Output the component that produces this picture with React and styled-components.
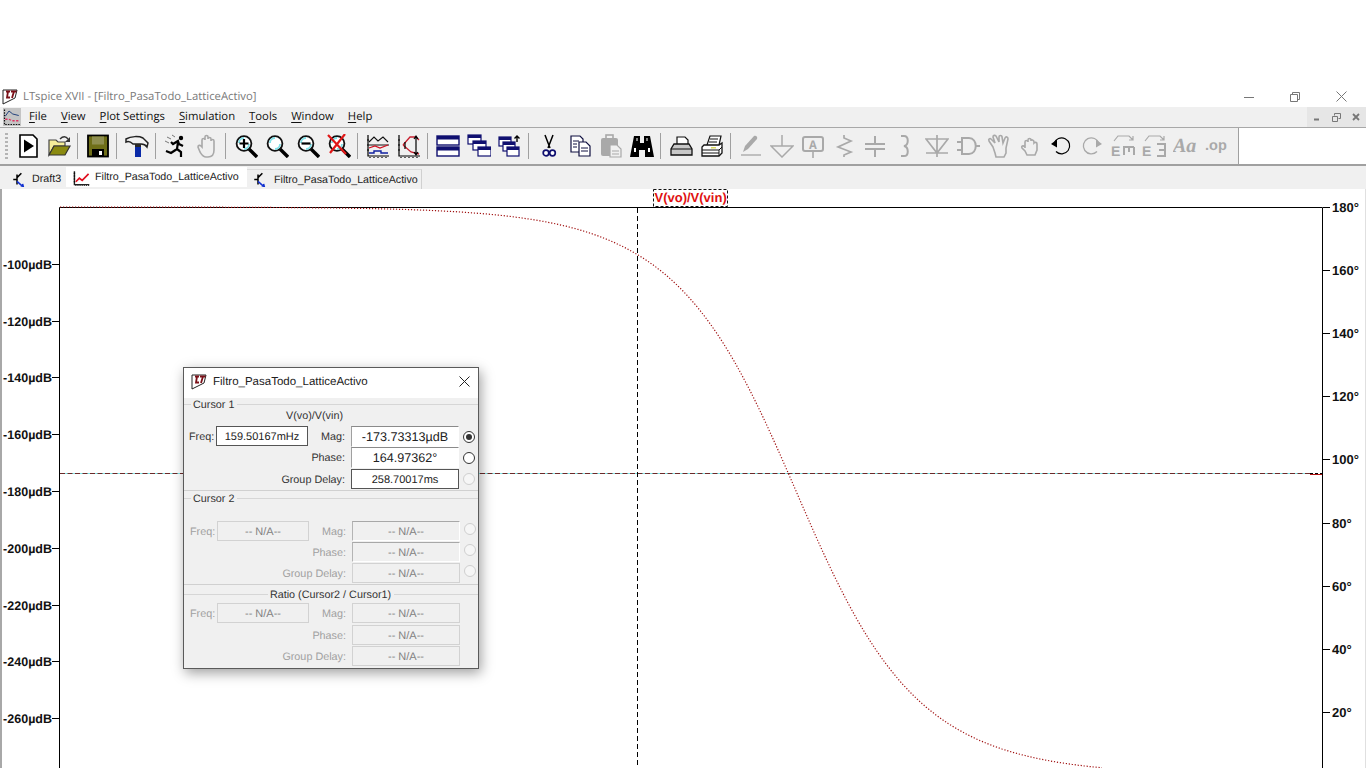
import React from 'react';
import styled, { createGlobalStyle } from 'styled-components';
import { Fragment } from 'react';

const GlobalStyle = createGlobalStyle`
  html, body { margin: 0; padding: 0; background: #ffffff; }
  body {
    width: 1366px;
    height: 768px;
    overflow: hidden;
    font-family: "Liberation Sans", Arial, sans-serif;
    text-rendering: geometricPrecision;
  }
`;

const Page = styled.div`
  width: 1366px;
  height: 768px;
  display: flex;
  flex-direction: column;
  padding-top: 86px;
  box-sizing: border-box;
  overflow: hidden;
`;

const TitleBar = styled.div`
  height: 21px;
  display: flex;
  align-items: center;
  padding-left: 2px;
  background: #ffffff;
`;

const TitleText = styled.span`
  margin: 0 0 1px 5px;
  font-family: "Open Sans", sans-serif;
  font-size: 11.3px;
  color: #7a7a7a;
`;

const WinControls = styled.div`
  margin-left: auto;
  display: flex;
  height: 100%;
  padding-right: 2px;
`;

const WinButton = styled.div`
  width: 46px;
  display: flex;
  align-items: center;
  justify-content: center;
`;

const MenuBar = styled.div`
  height: 20px;
  background: #f0f0f0;
  border-bottom: 1px solid #a8a8a8;
  display: flex;
  align-items: center;
  padding-left: 3px;
`;

const MenuLogo = styled.div`
  width: 18px;
  height: 18px;
  background: #c4c4c4;
  margin-right: 8px;
`;

const MenuItem = styled.span`
  font-family: "Open Sans", sans-serif;
  font-size: 11.3px;
  color: #111111;
  margin: 0 14px 1px 0;
  u { text-underline-offset: 2px; }
`;

const MdiButtons = styled.div`
  margin-left: auto;
  width: 59px;
  height: 20px;
  background: #e6e6e6;
  display: flex;
`;

const MdiButton = styled.div`
  flex: 1;
  display: flex;
  align-items: center;
  justify-content: center;
`;

const ToolbarRow = styled.div`
  height: 36px;
  border-bottom: 2px solid #a0a0a0;
  display: flex;
  background: #ffffff;
`;

const Toolbar = styled.div`
  width: 1239px;
  box-sizing: border-box;
  background: #f0f0f0;
  border-right: 1px solid #a0a0a0;
  display: flex;
  align-items: center;
`;

const Gripper = styled.div`
  width: 3px;
  height: 26px;
  margin: 0 4px 0 5px;
  background: repeating-linear-gradient(to bottom, #b4b4b4 0 2px, transparent 2px 4px);
`;

const ToolButton = styled.div`
  width: 31px;
  height: 30px;
  display: flex;
  align-items: center;
  justify-content: center;
`;

const ToolSep = styled.div`
  width: 1px;
  height: 26px;
  margin: 0 4px 0 3px;
  background: #a0a0a0;
`;

const TabBar = styled.div`
  height: 23px;
  background: #f0f0f0;
  display: flex;
  align-items: flex-start;
  padding-left: 3px;
`;

const Tab = styled.div`
  box-sizing: border-box;
  display: flex;
  align-items: center;
  margin-top: ${({ $active }) => ($active ? '1px' : '3px')};
  height: 20px;
  width: ${({ $width }) => $width}px;
  padding-left: ${({ $pad }) => $pad}px;
  background: ${({ $active }) => ($active ? '#ffffff' : '#f0f0f0')};
  border-right: ${({ $edge }) => ($edge ? '1px solid #d0d0d0' : '0')};
  border-top: ${({ $edge }) => ($edge ? '1px solid #dcdcdc' : '0')};
  font-size: 10.7px;
  color: #222222;
  svg { margin-right: ${({ $gap }) => $gap}px; flex: none; }
`;

const PlotArea = styled.div`
  position: relative;
  flex: 1;
  min-height: 0;
  background: #ffffff;
  border-left: 2px solid #a8a8a8;
  border-right: 1px solid #e0e0e0;
`;

const PlotSvg = styled.svg`
  display: block;
  text {
    font-family: "Liberation Sans", Arial, sans-serif;
    font-weight: 700;
    font-size: 13px;
    fill: #111111;
  }
  text.left { font-size: 12.5px; text-anchor: end; }
  text.trace { fill: #e01010; }
`;

const Dialog = styled.div`
  position: absolute;
  left: 181px;
  top: 178px;
  width: 296px;
  height: 302px;
  box-sizing: border-box;
  background: #f0f0f0;
  border: 1px solid #5a5a5a;
  box-shadow: 2px 4px 12px rgba(0, 0, 0, 0.38);
  font-size: 10.8px;
  color: #333333;
`;

const DialogTitle = styled.div`
  height: 30px;
  box-sizing: border-box;
  background: #ffffff;
  display: flex;
  align-items: center;
  padding: 0 8px 3px 7px;
  font-size: 11.5px;
  color: #222222;
  span { margin-left: 6px; flex: 1; }
`;

const GroupHead = styled.div`
  height: ${({ $height }) => $height}px;
  box-sizing: border-box;
  padding-top: 2px;
  display: flex;
  align-items: center;
  color: #333333;
  &::before {
    content: "";
    height: 1px;
    background: #d6d6d6;
    flex: ${({ $center }) => ($center ? '1' : '0 0 7px')};
    margin: 0 2px 2px 0;
  }
  &::after {
    content: "";
    height: 1px;
    background: #d6d6d6;
    flex: 1;
    margin: 0 0 2px 3px;
  }
`;

const Subtitle = styled.div`
  height: 16px;
  line-height: 13px;
  padding-left: 102px;
  color: #333333;
`;

const Divider = styled.div`
  height: 1px;
  background: #d0d0d0;
`;

const Rows = styled.div`
  padding: ${({ $top }) => $top || 0}px 0 0 ${({ $shift }) => 5 + ($shift || 0)}px;
`;

const Row = styled.div`
  display: grid;
  grid-template-columns: 27px 92px 43px 108px 20px;
  height: ${({ $height }) => $height}px;
  align-items: start;
`;

const FieldLabel = styled.div`
  grid-column: ${({ $col }) => $col};
  height: 20px;
  line-height: 22px;
  text-align: right;
  white-space: nowrap;
  padding-right: ${({ $right }) => $right}px;
  color: ${({ $off }) => ($off ? '#a0a0a0' : '#333333')};
`;

const borders = {
  box: 'border: 1px solid #555555;',
  inset: 'border: 1px solid #ffffff; border-top-color: #8a8a8a; border-left-color: #a0a0a0;',
  offbox: 'border: 1px solid #d2d2d2;',
  offinset: 'border: 1px solid #ffffff; border-top-color: #a8a8a8; border-left-color: #b4b4b4;',
};

const Field = styled.div`
  grid-column: ${({ $col }) => $col};
  box-sizing: border-box;
  height: ${({ $tall }) => ($tall ? 21 : 20)}px;
  line-height: 20px;
  text-align: center;
  white-space: nowrap;
  background: ${({ $off }) => ($off ? '#f0f0f0' : '#ffffff')};
  color: ${({ $off }) => ($off ? '#808080' : '#222222')};
  font-size: ${({ $big }) => ($big ? 12.6 : 11)}px;
  ${({ $kind }) => borders[$kind]}
`;

const Radio = styled.div`
  grid-column: 5;
  justify-self: center;
  margin-top: ${({ $top }) => $top}px;
  width: 12px;
  height: 12px;
  box-sizing: border-box;
  border-radius: 50%;
  border: 1px solid ${({ $off }) => ($off ? '#cfcfcf' : '#333333')};
  background: ${({ $off }) => ($off ? '#f6f6f6' : '#ffffff')};
  display: flex;
  align-items: center;
  justify-content: center;
  &::after {
    content: "";
    width: 6px;
    height: 6px;
    border-radius: 50%;
    background: ${({ $checked }) => ($checked ? '#333333' : 'transparent')};
  }
`;

const G = '#a9a9a9';
const Lens = ({ children }) => (
  <>
    <line x1="15" y1="15" x2="23" y2="23" stroke="#000" strokeWidth="3.4" />
    <circle cx="10" cy="9.5" r="7.4" fill="#fff" stroke="#111" strokeWidth="1.8" />
    <path d="M5 9a5 5 0 0 1 5-5M15 10a5 5 0 0 1-5 5" fill="none" stroke="#7fe0e8" strokeWidth="1.8" />
    {children}
  </>
);

const icons = {
  schematic: (
    <>
      <path d="M2 12h5M8 4v16M8 9l7-7" fill="none" stroke="#000" strokeWidth="2.4" />
      <path d="M8 15l9 8M14 22l4 1-1-4" fill="none" stroke="#1030d0" strokeWidth="2.4" />
    </>
  ),
  waves: (
    <>
      <path d="M2 3v19h21" fill="none" stroke="#222" strokeWidth="2" />
      <path d="M4 23v1M7 23v1M10 23v1M13 23v1M16 23v1M19 23v1M22 23v1M1 6h2M1 10h2M1 14h2M1 18h2" stroke="#000" strokeWidth="1.5" />
      <path d="M4 18l5-5 4 3 9-9" fill="none" stroke="#e01020" strokeWidth="2.4" />
    </>
  ),
  menuPlot: (
    <>
      <path d="M2 2v20h21" fill="none" stroke="#111" strokeWidth="1.6" strokeDasharray="2 1.5" />
      <path d="M3 11l5-7 5 4 8 2" fill="none" stroke="#20407a" strokeWidth="1.3" />
      <path d="M3 15h5l4 2h9" fill="none" stroke="#e03060" strokeWidth="1.8" strokeDasharray="3 2" />
    </>
  ),
  newSim: (
    <>
      <path d="M4 1h13l4 4v18H4z" fill="#fff" stroke="#000" strokeWidth="1.6" />
      <path d="M8 5.5l10 6.5-10 6.5z" fill="#000" />
    </>
  ),
  open: (
    <>
      <path d="M2 21V6h7l2 2h7v4H7z" fill="#f4ee9a" stroke="#444" strokeWidth="1.2" />
      <path d="M2 21l5-9h16l-5 9z" fill="#8a8a10" stroke="#333" strokeWidth="1.2" />
      <path d="M13 5c3-3 6-3 8 0" fill="none" stroke="#333" strokeWidth="1.4" />
      <path d="M23 3v5h-5z" fill="#333" />
    </>
  ),
  save: (
    <>
      <rect x="2" y="1.5" width="20" height="21" fill="#6f6f18" stroke="#000" strokeWidth="1.8" />
      <rect x="6" y="2.500" width="12" height="8" fill="#8f8f50" />
      <rect x="6" y="15" width="12" height="7" fill="#000" />
      <rect x="13" y="17" width="3" height="4" fill="#fff" />
    </>
  ),
  hammer: (
    <>
      <path d="M1 5c5-3 13-3 17-1l5 5-1 4c-2-3-4-3-6-3H8C6 8 3 7 1 8z" fill="#f2f2f2" stroke="#222" strokeWidth="1.5" />
      <rect x="10" y="10" width="6" height="3" fill="#2a2a2a" />
      <rect x="10" y="13" width="6" height="10" fill="#0a2aa8" />
    </>
  ),
  runner: (
    <>
      <path d="M3 3l4 2M1 7l4 2M8 1l3 2" stroke="#777" strokeWidth="1" fill="none" />
      <circle cx="17" cy="4" r="2.2" fill="#000" />
      <path d="M19 12l-4-2-1-3-5 3-2-2M14 8l-1 7-6 4-5-2M13 15l4 3v5" fill="none" stroke="#000" strokeWidth="2.2" />
    </>
  ),
  hand: (
    <path d="M7 13V6a1.4 1.4 0 0 1 3 0V3a1.4 1.4 0 0 1 3 0v2a1.4 1.4 0 0 1 3 0v2a1.4 1.4 0 0 1 3 0v9c0 4-2 7-6 7h-2c-3 0-4-2-6-5l-2-5c0-2 2-2 3-1z" fill="none" stroke={G} strokeWidth="1.6" />
  ),
  zoomIn: <Lens><path d="M5.5 9.5h9M10 5v9" stroke="#000" strokeWidth="2.2" /></Lens>,
  zoomFit: <Lens />,
  zoomOut: <Lens><path d="M5.5 9.5h9" stroke="#000" strokeWidth="2.2" /></Lens>,
  zoomCancel: <Lens><path d="M1 1l18 19M18 0L3 19" stroke="#e01818" strokeWidth="2.2" /></Lens>,
  plotPanes: (
    <>
      <path d="M2 1v21h21M4 23v1M8 23v1M12 23v1M16 23v1M20 23v1M1 6h2M1 11h2M1 16h2" fill="none" stroke="#000" strokeWidth="1.2" />
      <path d="M3 8l5-5 4 4 5-4 5 5M3 11h20" fill="none" stroke="#111" strokeWidth="1.1" />
      <path d="M3 14l6-2 5 2 8-3" fill="none" stroke="#d01020" strokeWidth="1.3" />
      <path d="M3 19h5v-2h7v2h7" fill="none" stroke="#1020a0" strokeWidth="1.4" />
    </>
  ),
  plotExpand: (
    <>
      <path d="M2 1v21h21M4 23v1M8 23v1M12 23v1M16 23v1M20 23v1M1 6h2M1 11h2M1 16h2" fill="none" stroke="#000" strokeWidth="1.2" />
      <path d="M6 11l7-8h6l3 3M6 11l8 7 8 2" fill="none" stroke="#c82030" strokeWidth="1.3" />
      <path d="M19 2v19M17 5l2-3 2 3M17 18l2 3 2-3M8 8v7" fill="none" stroke="#000" strokeWidth="1.2" />
    </>
  ),
  tile: (
    <>
      <rect x="1" y="2" width="22" height="9" fill="#fff" stroke="#101070" strokeWidth="1.4" />
      <rect x="1" y="13" width="22" height="9" fill="#fff" stroke="#101070" strokeWidth="1.4" />
      <rect x="1" y="2" width="22" height="3.5" fill="#101070" />
      <rect x="1" y="13" width="22" height="3.5" fill="#101070" />
    </>
  ),
  cascade: (
    <>
      {[[1, 1], [6, 7], [11, 13]].map(([x, y]) => (
        <Fragment key={x}>
          <rect x={x} y={y} width="13" height="9" fill="#fff" stroke="#101070" strokeWidth="1.2" />
          <rect x={x} y={y} width="13" height="3" fill="#101070" />
        </Fragment>
      ))}
    </>
  ),
  closeAll: (
    <>
      {[[1, 3], [5, 8], [9, 13]].map(([x, y]) => (
        <Fragment key={x}>
          <rect x={x} y={y} width="12" height="9" fill="#fff" stroke="#101070" strokeWidth="1.2" />
          <rect x={x} y={y} width="12" height="3" fill="#101070" />
        </Fragment>
      ))}
      <path d="M19 8V2M16.500 4.500L19 2l2.500 2.500" fill="none" stroke="#000" strokeWidth="1.4" />
    </>
  ),
  cut: (
    <>
      <path d="M8 1l5 13M16 1l-5 13" fill="none" stroke="#000" strokeWidth="1.5" />
      <circle cx="9" cy="19" r="2.8" fill="#fff" stroke="#101070" strokeWidth="1.7" />
      <circle cx="15.500" cy="19" r="2.8" fill="#fff" stroke="#101070" strokeWidth="1.7" />
    </>
  ),
  copy: (
    <>
      <path d="M3 2h9l3 3v13H3z" fill="#fff" stroke="#101040" strokeWidth="1.2" />
      <path d="M11 8h7l4 4v10H11z" fill="#fff" stroke="#101040" strokeWidth="1.2" />
      <path d="M5 7h6M5 10h4M5 13h4M13 14h7M13 17h7" stroke="#101040" />
    </>
  ),
  paste: (
    <>
      <rect x="2" y="4" width="17" height="18" rx="2" fill={G} />
      <rect x="7" y="1" width="7" height="5" fill="none" stroke={G} strokeWidth="1.6" />
      <path d="M11 11h7l4 4v8H11z" fill="#f0f0f0" stroke={G} strokeWidth="1.2" />
      <path d="M13 17h7M13 20h7" stroke={G} />
    </>
  ),
  find: (
    <>
      <path d="M4 2h6v7h4V2h6l4 21h-9v-7h-6v7H0z" fill="#000" />
      <rect x="4" y="14" width="2" height="4" fill="#fff" />
      <rect x="18" y="14" width="2" height="4" fill="#fff" />
      <path d="M7 4v3M17 4v3" stroke="#fff" />
    </>
  ),
  print: (
    <>
      <path d="M8 10V3h8l3 3v4" fill="#fff" stroke="#111" strokeWidth="1.2" />
      <path d="M5 10h15l3 5v6H2v-6z" fill="#c8c8c8" stroke="#111" strokeWidth="1.3" />
      <path d="M2 15h21" stroke="#111" />
    </>
  ),
  printSetup: (
    <>
      <path d="M7 11l3-9h11l-2 9" fill="#fff" stroke="#111" strokeWidth="1.2" />
      <path d="M10 5h8M9 8h8" stroke="#111" />
      <path d="M4 11h15l3-2v10l-3 3H2V13z" fill="#fff" stroke="#111" strokeWidth="1.3" />
      <path d="M2 16h17l3-3M2 19h17M19 16v6" fill="none" stroke="#111" />
      <rect x="11" y="13" width="5" height="1.500" fill="#d8d860" />
    </>
  ),
  pencil: (
    <>
      <path d="M4 18l2-6L15 2c2-1 4 1 3 3L9 15z" fill={G} />
      <path d="M2 21h20" stroke={G} strokeWidth="1.4" />
    </>
  ),
  ground: <path d="M12 1v11M1 12h22L12 23z" fill="none" stroke={G} strokeWidth="1.5" />,
  label: (
    <>
      <rect x="2" y="3" width="20" height="14" rx="2" fill="none" stroke={G} strokeWidth="2" />
      <path d="M12 17v7" stroke={G} strokeWidth="1.6" />
      <text x="12" y="14.500" textAnchor="middle" fontSize="13" fontWeight="700" fontFamily="Liberation Mono" fill={G}>A</text>
    </>
  ),
  resistor: <path d="M12 1v3l7 3-13 6 13 5-7 3v2" fill="none" stroke={G} strokeWidth="1.7" />,
  capacitor: <path d="M12 2v8M2 10h20M2 15h20M12 15v8" fill="none" stroke={G} strokeWidth="2" />,
  inductor: <path d="M7 2h3c5 0 5 9 0 10c5 1 5 10 0 10H7" fill="none" stroke={G} strokeWidth="2" />,
  diode: <path d="M12 1v22M1 5h22L12 19zM1 19h22" fill="none" stroke={G} strokeWidth="1.7" />,
  gate: <path d="M1 8h5M1 16h5M6 4h7c9 0 9 16 0 16H6zM20 12h4" fill="none" stroke={G} strokeWidth="2" />,
  handBig: (
    <path d="M6 13L2 7c-1-2 1-3 2-2l4 4-2-6c0-2 2-2 3-1l3 6V3c0-2 3-2 3 0l1 6 2-5c1-2 3-1 3 1l-2 9v5l-2 4H9l-1-4z" fill="none" stroke={G} strokeWidth="1.6" />
  ),
  handSmall: (
    <path d="M7 14V8c0-2 3-2 3 0V6c0-2 3-2 3 0v1c0-2 3-1 3 1v1c1-1 3-1 3 1v6l-2 5H9l-2-4-3-3c-1-2 1-3 3-1z" fill="none" stroke={G} strokeWidth="1.6" />
  ),
  undo: (
    <>
      <path d="M5 9.500a8 8 0 1 1 2 8" fill="none" stroke="#000" strokeWidth="1.2" />
      <path d="M2 10l6-4.500 0 8z" fill="#000" />
    </>
  ),
  redo: (
    <>
      <path d="M19 9.500a8 8 0 1 0-2 8" fill="none" stroke={G} strokeWidth="1.3" />
      <path d="M22 10l-6-4.500 0 8z" fill={G} />
    </>
  ),
  rotate: (
    <>
      <path d="M3 7l4-5h11l4 4M22 2v4h-4" fill="none" stroke={G} strokeWidth="1.2" />
      <text x="0" y="22" fontSize="14" fontWeight="700" fontFamily="Liberation Sans" fill={G}>E</text>
      <path d="M12 13h11M13 13v8M18 13v5M23 13v8" fill="none" stroke={G} strokeWidth="2" />
    </>
  ),
  mirror: (
    <>
      <path d="M3 7l4-5h11l4 4M22 2v4h-4" fill="none" stroke={G} strokeWidth="1.2" />
      <text x="0" y="22" fontSize="14" fontWeight="700" fontFamily="Liberation Sans" fill={G}>E</text>
      <path d="M15 10h8v12h-8M17 16h6" fill="none" stroke={G} strokeWidth="2" />
    </>
  ),
  text: (
    <text x="0" y="18" fontSize="20" fontWeight="700" fontStyle="italic" fontFamily="Liberation Serif" fill={G}>Aa</text>
  ),
  op: (
    <text x="1" y="16" fontSize="14.500" fontWeight="700" fontFamily="Liberation Sans" fill={G}>.op</text>
  ),
};

const Icon = ({ name, size = 24 }) => (
  <svg width={size} height={size} viewBox="0 0 24 24">{icons[name]}</svg>
);

const LtLogo = ({ size = 16 }) => (
  <svg width={size} height={size} viewBox="0 0 16 16">
    <path d="M1 1v14l12-6 2-8z" fill="#fff" stroke="#222" strokeWidth="1" />
    <path d="M4 2.500h4M6 2.500L5 8.500h3M9 2.500h5.500M12 2.500L10 9" fill="none" stroke="#7a1018" strokeWidth="1.800" />
  </svg>
);

const toolGroups = [
  ['newSim', 'open'],
  ['save'],
  ['hammer'],
  ['runner', 'hand'],
  ['zoomIn', 'zoomFit', 'zoomOut', 'zoomCancel'],
  ['plotPanes', 'plotExpand'],
  ['tile', 'cascade', 'closeAll'],
  ['cut', 'copy', 'paste', 'find'],
  ['print', 'printSetup'],
  ['pencil', 'ground', 'label', 'resistor', 'capacitor', 'inductor', 'diode', 'gate', 'handBig', 'handSmall', 'undo', 'redo', 'rotate', 'mirror', 'text', 'op'],
];

const menus = [
  ['F', 'ile'],
  ['V', 'iew'],
  ['P', 'lot Settings'],
  ['S', 'imulation'],
  ['T', 'ools'],
  ['W', 'indow'],
  ['H', 'elp'],
];

const leftTicks = [
  [264, '-100µdB'], [321, '-120µdB'], [377, '-140µdB'], [434, '-160µdB'], [491, '-180µdB'],
  [548, '-200µdB'], [605, '-220µdB'], [661, '-240µdB'], [718, '-260µdB'],
];

const rightTicks = [
  [207, '180°'], [270, '160°'], [333, '140°'], [396, '120°'], [459, '100°'],
  [523, '80°'], [586, '60°'], [649, '40°'], [712, '20°'],
];

// first order all-pass phase, log frequency on x
const phasePath = () => {
  let d = '';
  for (let x = 60; x <= 1102; x += 2) {
    const u = Math.pow(10, (x - 796) / 180.6);
    const y = 207 + (2 * Math.atan(u) * 180 / Math.PI) * 3.156;
    d += `${d ? 'L' : 'M'}${x} ${y.toFixed(1)}`;
  }
  return d;
};

const Plot = () => (
  <PlotSvg width="1363" height="579" viewBox="2 189 1363 579">
    <rect x="653.500" y="189.500" width="74" height="17" fill="none" stroke="#111" strokeDasharray="3 2" />
    <text className="trace" x="654.500" y="202">V(vo)/V(vin)</text>
    <path d="M59.500 768V207.500H1322.500V768" fill="none" stroke="#000" />
    {leftTicks.map(([y, label]) => (
      <Fragment key={label}>
        <line x1="52" x2="59" y1={y + 0.5} y2={y + 0.5} stroke="#000" />
        <text className="left" x="52" y={y + 5}>{label}</text>
      </Fragment>
    ))}
    {rightTicks.map(([y, label]) => (
      <Fragment key={label}>
        <line x1="1323" x2="1330" y1={y + 0.5} y2={y + 0.5} stroke="#000" />
        <text x="1332" y={y + 5}>{label}</text>
      </Fragment>
    ))}
    <line x1="60" x2="1310" y1="473.500" y2="473.500" stroke="#80e4e4" />
    <line x1="60" x2="1310" y1="473.500" y2="473.500" stroke="#6a2a2a" strokeDasharray="5 2.500" />
    <line x1="1310" x2="1322" y1="474.500" y2="474.500" stroke="#b01010" />
    <line x1="1310" x2="1322" y1="473.500" y2="473.500" stroke="#000" strokeDasharray="3 2" />
    <line x1="637.500" x2="637.500" y1="208" y2="768" stroke="#000" strokeDasharray="5 3" />
    <path d={phasePath()} fill="none" stroke="#a01010" strokeWidth="1.2" strokeDasharray="1.2 1.8" />
  </PlotSvg>
);

const ReadoutRow = ({ freq, midLabel, value, kind, big, radio, radioTop = 2, checked, off, tall, height = 21 }) => (
  <Row $height={height}>
    {freq ? (
      <>
        <FieldLabel $col="1" $right={3} $off={off}>Freq:</FieldLabel>
        <Field $col="2" $kind={off ? 'offbox' : 'box'} $off={off}>{freq}</Field>
        <FieldLabel $col="3" $right={6} $off={off}>{midLabel}</FieldLabel>
      </>
    ) : (
      <FieldLabel $col="1 / 4" $right={6} $off={off}>{midLabel}</FieldLabel>
    )}
    <Field $col="4" $kind={kind} $big={big} $off={off} $tall={tall}>{value}</Field>
    {radio && <Radio $off={radio === 'off'} $checked={checked} $top={radioTop} />}
  </Row>
);

const NA = '-- N/A--';

const App = () => (
  <Page>
    <GlobalStyle />
    <TitleBar>
      <LtLogo />
      <TitleText>LTspice XVII - [Filtro_PasaTodo_LatticeActivo]</TitleText>
      <WinControls>
        <WinButton>
          <svg width="10" height="10"><path d="M0 5.500h10" stroke="#777" /></svg>
        </WinButton>
        <WinButton>
          <svg width="10" height="10"><path d="M.5 2.500h7v7h-7zM2.500 2.500v-2h7v7h-2" fill="none" stroke="#777" /></svg>
        </WinButton>
        <WinButton>
          <svg width="11" height="11"><path d="M.5.5l10 10M10.500.5l-10 10" stroke="#777" /></svg>
        </WinButton>
      </WinControls>
    </TitleBar>
    <MenuBar>
      <MenuLogo><Icon name="menuPlot" size={18} /></MenuLogo>
      {menus.map(([key, rest]) => (
        <MenuItem key={key}><u>{key}</u>{rest}</MenuItem>
      ))}
      <MdiButtons>
        <MdiButton>
          <svg width="8" height="8"><path d="M1 6.500h5" stroke="#777" strokeWidth="2" /></svg>
        </MdiButton>
        <MdiButton>
          <svg width="9" height="9"><path d="M.5 3.500h5v5h-5zM2.500 2.500v-2h6v5h-2" fill="none" stroke="#777" /></svg>
        </MdiButton>
        <MdiButton>
          <svg width="8" height="8"><path d="M1 1l6 6M7 1L1 7" stroke="#777" strokeWidth="1.800" /></svg>
        </MdiButton>
      </MdiButtons>
    </MenuBar>
    <ToolbarRow>
      <Toolbar>
        <Gripper />
        {toolGroups.map((group, i) => (
          <Fragment key={group[0]}>
            {i > 0 && <ToolSep />}
            {group.map((name) => (
              <ToolButton key={name}><Icon name={name} /></ToolButton>
            ))}
          </Fragment>
        ))}
      </Toolbar>
    </ToolbarRow>
    <TabBar>
      <Tab $width={63} $pad={9} $gap={5}><Icon name="schematic" size={15} />Draft3</Tab>
      <Tab $active $width={181} $pad={7} $gap={5}><Icon name="waves" size={17} />Filtro_PasaTodo_LatticeActivo</Tab>
      <Tab $edge $width={175} $pad={6} $gap={6}><Icon name="schematic" size={15} />Filtro_PasaTodo_LatticeActivo</Tab>
    </TabBar>
    <PlotArea>
      <Plot />
      <Dialog>
        <DialogTitle>
          <LtLogo />
          <span>Filtro_PasaTodo_LatticeActivo</span>
          <svg width="11" height="11"><path d="M.5.5l10 10M10.500.5l-10 10" stroke="#222" /></svg>
        </DialogTitle>
        <GroupHead $height={12}>Cursor 1</GroupHead>
        <Subtitle>V(vo)/V(vin)</Subtitle>
        <Rows>
          <ReadoutRow freq="159.50167mHz" midLabel="Mag:" value="-173.73313µdB" kind="inset" big radio="on" radioTop={5} checked tall />
          <ReadoutRow midLabel="Phase:" value="164.97362°" kind="inset" big radio="on" radioTop={5} tall height={22} />
          <ReadoutRow midLabel="Group Delay:" value="258.70017ms" kind="box" radio="off" radioTop={4} />
        </Rows>
        <Divider />
        <GroupHead $height={14}>Cursor 2</GroupHead>
        <Rows $top={16} $shift={1}>
          <ReadoutRow off freq={NA} midLabel="Mag:" value={NA} kind="offinset" radio="off" />
          <ReadoutRow off midLabel="Phase:" value={NA} kind="offinset" radio="off" />
          <ReadoutRow off midLabel="Group Delay:" value={NA} kind="offbox" radio="off" />
        </Rows>
        <Divider />
        <GroupHead $height={18} $center>Ratio (Cursor2 / Cursor1)</GroupHead>
        <Rows $shift={1}>
          <ReadoutRow off freq={NA} midLabel="Mag:" value={NA} kind="offbox" height={22} />
          <ReadoutRow off midLabel="Phase:" value={NA} kind="offbox" />
          <ReadoutRow off midLabel="Group Delay:" value={NA} kind="offbox" />
        </Rows>
      </Dialog>
    </PlotArea>
  </Page>
);

export default App;
